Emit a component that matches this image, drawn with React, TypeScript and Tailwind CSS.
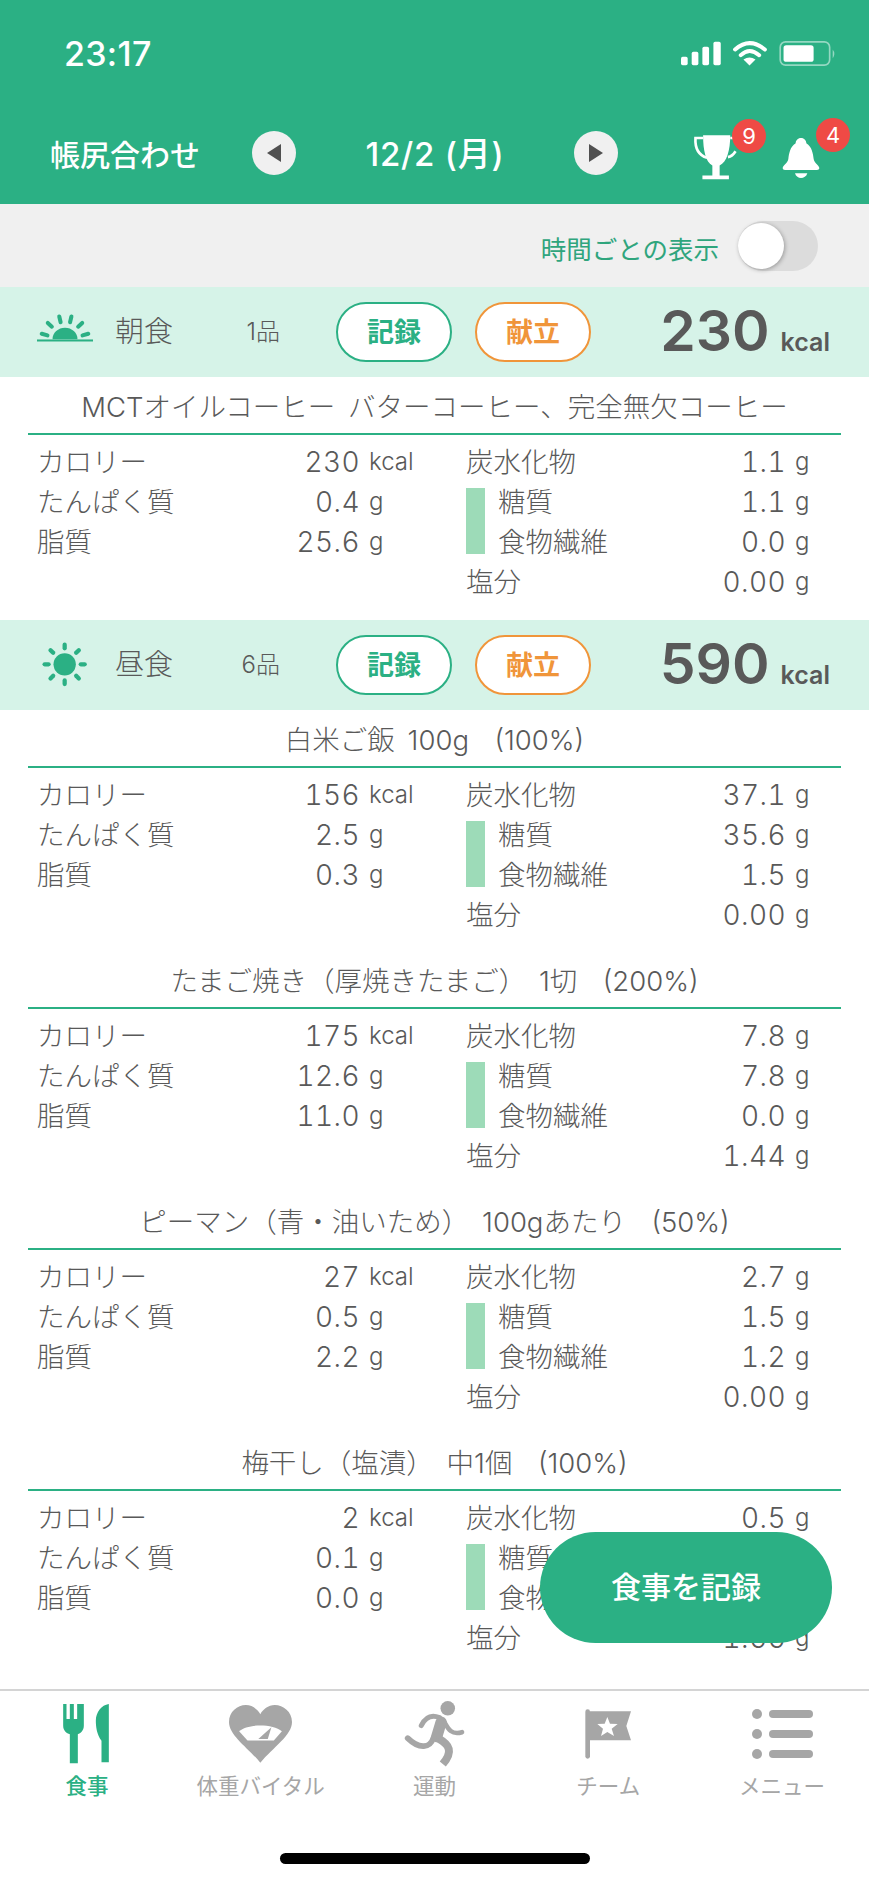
import React from "react";

const G = "#2bb084";
const GY = "#a6a6a6";

type Item = { title: string; cal: string; p: string; f: string; c: string; s: string; fb: string; salt: string };

const Val = ({ n, u, w }: { n: string; u: string; w: string }) => (
  <>
    <span className="flex-1 text-right text-[28px] font-light tabular-nums tracking-[0.4px]">{n}</span>
    <span className={`ml-[9px] text-[24px] font-light ${w}`}>{u}</span>
  </>
);

const Row = ({ label, n, u, unitW }: { label?: string; n?: string; u?: string; unitW: string }) => (
  <div className="flex h-[40px] items-center">
    <span className="pt-[1px] text-[27.5px] font-light">{label}</span>
    {n && u ? <Val n={n} u={u} w={unitW} /> : null}
  </div>
);

const FoodItem = ({ it }: { it: Item }) => (
  <div className="pb-[16px]">
    <div className="mx-[28px] flex h-[58px] items-center justify-center whitespace-pre border-b-2 border-[#2bb084] pt-[6px] text-[27.5px] font-light leading-none [word-spacing:5px]">
      {it.title}
    </div>
    <div className="flex pl-[37px] pt-[7px]">
      <div className="w-[429px] pr-[53px]">
        <Row label="カロリー" n={it.cal} u="kcal" unitW="w-[44px]" />
        <Row label="たんぱく質" n={it.p} u="g" unitW="w-[44px]" />
        <Row label="脂質" n={it.f} u="g" unitW="w-[44px]" />
      </div>
      <div className="w-[343px]">
        <Row label="炭水化物" n={it.c} u="g" unitW="w-[14px]" />
        <div className="flex">
          <div className="mb-[8px] mt-[6px] w-[19px] bg-[#9ddbb8]" />
          <div className="ml-[13px] flex-1">
            <Row label="糖質" n={it.s} u="g" unitW="w-[14px]" />
            <Row label="食物繊維" n={it.fb} u="g" unitW="w-[14px]" />
          </div>
        </div>
        <Row label="塩分" n={it.salt} u="g" unitW="w-[14px]" />
      </div>
    </div>
  </div>
);

const Sunrise = () => (
  <svg width="56" height="30" viewBox="37 40 166 88" className="mb-[8px] ml-[37px] mr-[22px]">
    <path d="M83 117 A37 34 0 0 1 157 117 Z" fill={G} />
    <rect x="37" y="118" width="166" height="6" fill={G} />
    <g stroke={G} strokeWidth="12" strokeLinecap="round">
      <line x1="51" y1="101" x2="68" y2="106" />
      <line x1="69" y1="69" x2="81" y2="80" />
      <line x1="103" y1="50" x2="107" y2="67" />
      <line x1="139" y1="50" x2="135" y2="67" />
      <line x1="171" y1="69" x2="159" y2="80" />
      <line x1="189" y1="101" x2="172" y2="106" />
    </g>
  </svg>
);

const Sun = () => (
  <svg width="46" height="46" viewBox="50 20 140 140" className="ml-[42px] mr-[27px]">
    <circle cx="119" cy="88" r="34" fill={G} />
    <g stroke={G} strokeWidth="13" strokeLinecap="round">
      <line x1="119" y1="28" x2="119" y2="39" />
      <line x1="119" y1="137" x2="119" y2="148" />
      <line x1="58" y1="88" x2="70" y2="88" />
      <line x1="168" y1="88" x2="180" y2="88" />
      <line x1="76" y1="45" x2="84" y2="53" />
      <line x1="162" y1="45" x2="154" y2="53" />
      <line x1="76" y1="131" x2="84" y2="123" />
      <line x1="162" y1="131" x2="154" y2="123" />
    </g>
  </svg>
);

const MealHeader = ({ icon, name, count, kcal }: { icon: React.ReactNode; name: string; count: string; kcal: string }) => (
  <div className="flex h-[90px] items-center bg-[#d6f3e8]">
    {icon}
    <span className="w-[58px] text-[29px] font-light">{name}</span>
    <span className="w-[107px] text-right text-[24px] font-light">{count}</span>
    <div className="ml-[56px] flex h-[60px] w-[116px] items-center justify-center rounded-[30px] border-2 border-[#2bb084] bg-white pt-[2px] text-[27px] font-bold text-[#2bb084]">
      記録
    </div>
    <div className="ml-[23px] flex h-[60px] w-[116px] items-center justify-center rounded-[30px] border-2 border-[#f0953a] bg-white pt-[2px] text-[27px] font-bold text-[#f0953a]">
      献立
    </div>
    <div className="flex flex-1 items-baseline justify-end pb-[4px] pr-[39px] font-semibold">
      <span className="text-[57px] leading-none">{kcal}</span>
      <span className="ml-[11px] text-[25px] leading-none">kcal</span>
    </div>
  </div>
);

const StatusIcons = () => (
  <svg width="157" height="27" viewBox="30 30 470 80" className="mr-[32px]">
    <g fill="#fff">
      <rect x="33" y="80" width="20" height="25" rx="5" />
      <rect x="65" y="65" width="20" height="40" rx="5" />
      <rect x="97" y="50" width="20" height="55" rx="5" />
      <rect x="130" y="35" width="22" height="70" rx="5" />
      <path d="M238 106 L220 88 Q238 76 256 88 Z" />
      <rect x="340" y="45" width="90" height="50" rx="8" />
    </g>
    <path d="M195 58 Q238 20 284 58 M212 75 Q238 50 267 75" fill="none" stroke="#fff" strokeWidth="12" strokeLinecap="round" />
    <rect x="330" y="35" width="148" height="70" rx="16" fill="none" stroke="#fff" strokeOpacity="0.5" strokeWidth="5" />
    <path d="M487 58 Q497 70 487 85 Z" fill="#fff" fillOpacity="0.5" />
  </svg>
);

const Trophy = () => (
  <svg width="45" height="48" viewBox="70 310 135 145" className="block">
    <path d="M100 314 H182 C182 360 172 395 150 405 V435 H178 V447 H98 V435 H128 V405 C108 395 100 360 100 314 Z" fill="#fff" />
    <path d="M100 322 H77 C75 355 90 375 112 382 M182 322 H196 M175 380 C185 378 192 372 198 362" fill="none" stroke="#fff" strokeWidth="8" />
  </svg>
);

const Bell = () => (
  <svg width="38" height="42" viewBox="335 320 114 124" className="block">
    <path d="M392 322 C402 322 408 330 408 338 C425 348 428 370 430 385 C432 398 446 404 447 412 C447 416 444 418 440 418 H344 C340 418 337 416 337 412 C338 404 352 398 354 385 C356 370 359 348 376 338 C376 330 382 322 392 322 Z" fill="#fff" />
    <path d="M374 428 H411 C408 438 400 442 392 442 C384 442 377 438 374 428 Z" fill="#fff" />
  </svg>
);

const FoodIcon = () => (
  <svg width="47" height="62" viewBox="40 22 140 186">
    <path fill={G} d="M40 25 H50 V70 H60 V25 H72 V70 H82 V25 H102 V90 C102 105 92 112 84 116 V203 H60 V116 C50 112 40 105 40 90 Z" />
    <path fill={G} d="M177 25 V200 H155 V135 C140 115 138 90 138 75 C138 50 155 28 177 25 Z" />
  </svg>
);

const VitalIcon = () => (
  <svg width="65" height="60" viewBox="532 22 193 178">
    <path fill={GY} d="M628 196 C590 150 535 115 535 75 C535 45 560 25 585 25 C605 25 620 38 628 52 C636 38 651 25 671 25 C696 25 722 45 722 75 C722 115 666 150 628 196 Z" />
    <path fill="#fff" d="M565 103 C590 80 665 80 692 103 L668 130 H590 Z" />
    <path fill={GY} d="M661 91 L622 126 H650 Z" />
  </svg>
);

const RunIcon = () => (
  <svg width="63" height="68" viewBox="30 15 190 205">
    <circle cx="165" cy="40" r="22" fill={GY} />
    <g fill="none" stroke={GY} strokeLinecap="round" strokeLinejoin="round">
      <path d="M140 68 C120 60 100 62 85 92" strokeWidth="15" />
      <path d="M145 82 L132 125" strokeWidth="34" />
      <path d="M155 82 C165 100 175 122 208 112" strokeWidth="14" />
      <path d="M122 128 C112 160 80 165 44 130" strokeWidth="17" />
      <path d="M138 132 C170 150 182 170 150 208" strokeWidth="24" strokeLinecap="butt" />
    </g>
  </svg>
);

const FlagIcon = () => (
  <svg width="49" height="52" viewBox="585 38 147 156">
    <rect x="589" y="42" width="14" height="148" rx="7" fill={GY} />
    <path fill={GY} d="M600 48 H726 L712 92 L726 135 H600 Z" />
    <path fill="#fff" d="M655 65 L663 85 L686 86 L668 100 L675 122 L655 110 L636 122 L642 100 L625 86 L647 85 Z" />
  </svg>
);

const MenuIcon = () => (
  <svg width="61" height="50" viewBox="0 0 61 50">
    <g fill={GY}>
      <ellipse cx="5" cy="5" rx="5" ry="5" />
      <ellipse cx="5" cy="25" rx="5" ry="5" />
      <ellipse cx="5" cy="45" rx="5" ry="5" />
      <rect x="17" y="1" width="44" height="8" rx="4" />
      <rect x="17" y="21" width="44" height="8" rx="4" />
      <rect x="17" y="41" width="44" height="8" rx="4" />
    </g>
  </svg>
);

const Tab = ({ icon, label, active }: { icon: React.ReactNode; label: string; active?: boolean }) => (
  <div className="flex flex-1 flex-col items-center">
    <div className="flex h-[72px] items-center justify-center">{icon}</div>
    <span className={`mt-[1px] text-[21.5px] leading-[30px] ${active ? "font-medium text-[#2bb084]" : "text-[#a6a6a6]"}`}>{label}</span>
  </div>
);

const breakfast: Item[] = [
  { title: "MCTオイルコーヒー バターコーヒー、完全無欠コーヒー", cal: "230", p: "0.4", f: "25.6", c: "1.1", s: "1.1", fb: "0.0", salt: "0.00" },
];
const lunch: Item[] = [
  { title: "白米ご飯 100g  (100%)", cal: "156", p: "2.5", f: "0.3", c: "37.1", s: "35.6", fb: "1.5", salt: "0.00" },
  { title: "たまご焼き（厚焼きたまご） 1切  (200%)", cal: "175", p: "12.6", f: "11.0", c: "7.8", s: "7.8", fb: "0.0", salt: "1.44" },
  { title: "ピーマン（青・油いため） 100gあたり  (50%)", cal: "27", p: "0.5", f: "2.2", c: "2.7", s: "1.5", fb: "1.2", salt: "0.00" },
  { title: "梅干し（塩漬） 中1個  (100%)", cal: "2", p: "0.1", f: "0.0", c: "0.5", s: "0.4", fb: "0.1", salt: "1.66" },
];

export default function App() {
  return (
    <div className="relative flex h-[1882px] w-[869px] flex-col overflow-hidden bg-white font-['Inter','Noto_Sans_CJK_JP',sans-serif] text-[#595959]">
      <header className="h-[204px] shrink-0 bg-[#2bb084] text-white">
        <div className="flex h-[106px] items-center justify-between">
          <span className="ml-[64px] text-[34px] font-medium tracking-[0.3px]">23:17</span>
          <StatusIcons />
        </div>
        <div className="flex h-[94px] items-center">
          <span className="ml-[50px] mt-[4px] w-[202px] text-[30px] font-medium">帳尻合わせ</span>
          <div className="flex h-[44px] w-[44px] items-center justify-center rounded-full bg-[#f0f0f0]">
            <svg width="14" height="18" viewBox="0 0 14 18"><path d="M14 0 V18 L0 9 Z" fill="#505050" /></svg>
          </div>
          <span className="mt-[4px] flex-1 text-center text-[33px] font-medium tracking-[0.8px]">12/2 (月)</span>
          <div className="flex h-[44px] w-[44px] items-center justify-center rounded-full bg-[#f0f0f0]">
            <svg width="14" height="18" viewBox="0 0 14 18"><path d="M0 0 V18 L14 9 Z" fill="#505050" /></svg>
          </div>
          <div className="relative ml-[75px] mt-[10px] w-[45px]">
            <Trophy />
            <span className="absolute left-[39px] top-[-15px] flex h-[34px] w-[34px] items-center justify-center rounded-full bg-[#ef4a45] text-[22px] text-white">9</span>
          </div>
          <div className="relative ml-[44px] mr-[49px] mt-[10px] w-[38px]">
            <Bell />
            <span className="absolute left-[34px] top-[-19px] flex h-[34px] w-[34px] items-center justify-center rounded-full bg-[#ef4a45] text-[22px] text-white">4</span>
          </div>
        </div>
      </header>

      <div className="flex h-[83px] shrink-0 items-center justify-end bg-[#f0f0f0] pr-[51px]">
        <span className="mr-[19px] mt-[9px] text-[25.5px] text-[#2fa57d]">時間ごとの表示</span>
        <div className="flex h-[50px] w-[80px] items-center rounded-full bg-[#dcdcdc]">
          <div className="h-[46px] w-[46px] rounded-full bg-white shadow-[1px_1px_4px_rgba(0,0,0,0.3)]" />
        </div>
      </div>

      <main className="min-h-0 flex-1 overflow-hidden">
        <MealHeader icon={<Sunrise />} name="朝食" count="1品" kcal="230" />
        <div className="pb-[2px]">
          {breakfast.map((it) => <FoodItem key={it.title} it={it} />)}
        </div>
        <MealHeader icon={<Sun />} name="昼食" count="6品" kcal="590" />
        {lunch.map((it) => <FoodItem key={it.title} it={it} />)}
      </main>

      <nav className="h-[193px] shrink-0 border-t-2 border-[#d4d4d4] bg-white">
        <div className="flex pt-[7px]">
          <Tab icon={<FoodIcon />} label="食事" active />
          <Tab icon={<VitalIcon />} label="体重バイタル" />
          <Tab icon={<RunIcon />} label="運動" />
          <Tab icon={<FlagIcon />} label="チーム" />
          <Tab icon={<MenuIcon />} label="メニュー" />
        </div>
        <div className="mx-auto mt-[52px] h-[11px] w-[310px] rounded-full bg-black" />
      </nav>

      <div className="absolute left-[540px] top-[1532px] flex h-[111px] w-[292px] items-center justify-center rounded-full bg-[#2bb084] text-[30px] font-medium text-white">
        食事を記録
      </div>
    </div>
  );
}
